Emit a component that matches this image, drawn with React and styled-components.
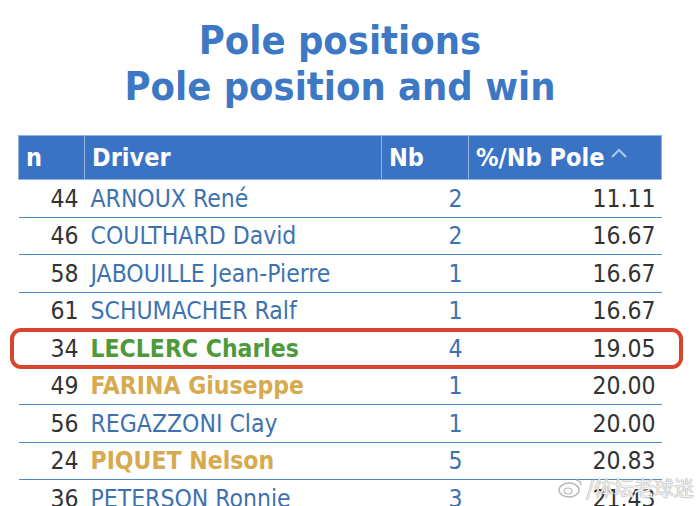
import styled, { createGlobalStyle } from "styled-components";

const GlobalStyle = createGlobalStyle`
  html, body {
    margin: 0;
    padding: 0;
    background: #ffffff;
  }
  body {
    font-family: "DejaVu Sans Condensed", "DejaVu Sans", sans-serif;
    overflow: hidden;
  }
`;

const Page = styled.div`
  position: relative;
  width: 700px;
  height: 506px;
  overflow: hidden;
  padding-top: 17px;
  box-sizing: border-box;
`;

const Title = styled.h1`
  margin: 0 0 26px 0;
  padding-right: 20px;
  text-align: center;
  font-family: "DejaVu Sans Condensed", "DejaVu Sans", sans-serif;
  font-weight: bold;
  font-size: 39.5px;
  line-height: 46px;
  color: #3d78c4;
`;

const Table = styled.table`
  margin-left: 18px;
  width: 643px;
  border-collapse: collapse;
  table-layout: fixed;
  font-size: 24.5px;
`;

const HeadCell = styled.th`
  height: 44px;
  padding: 0 7px;
  background: #3a72c4;
  color: #ffffff;
  font-size: 25px;
  font-weight: bold;
  text-align: left;
  border: 1px solid #8fb3e3;
  width: ${(p) => p.$w}px;
  box-sizing: border-box;
  white-space: nowrap;
`;

const Caret = styled.svg`
  margin-left: 6px;
  vertical-align: 7px;
`;

const Row = styled.tr`
  height: 37.5px;
  border-bottom: 1.5px solid #4f88c6;
`;

const Cell = styled.td`
  padding: 0 6px;
  text-align: ${(p) => p.$align || "left"};
  color: ${(p) => p.$color || "#333333"};
  font-weight: ${(p) => (p.$bold ? "bold" : "normal")};
  white-space: nowrap;
`;

const Highlight = styled.div`
  position: absolute;
  left: 10px;
  top: 328px;
  width: 673px;
  height: 41px;
  border: 4px solid #d8452f;
  border-radius: 11px;
  box-sizing: border-box;
  pointer-events: none;
`;

const Watermark = styled.div`
  position: absolute;
  right: 6px;
  bottom: 4px;
  display: flex;
  align-items: center;
  gap: 2px;
  font-family: "Noto Sans CJK SC", sans-serif;
  font-size: 20px;
  color: rgba(255, 255, 255, 0.85);
  text-shadow: 0 0 1px #9a9a9a, 0 0 1px #9a9a9a;
  pointer-events: none;
`;

const nameColors = {
  blue: "#3d72b0",
  green: "#4e9a3b",
  gold: "#d6aa4e",
};

const drivers = [
  { n: 44, name: "ARNOUX René", nb: 2, pct: "11.11", kind: "blue" },
  { n: 46, name: "COULTHARD David", nb: 2, pct: "16.67", kind: "blue" },
  { n: 58, name: "JABOUILLE Jean-Pierre", nb: 1, pct: "16.67", kind: "blue" },
  { n: 61, name: "SCHUMACHER Ralf", nb: 1, pct: "16.67", kind: "blue" },
  { n: 34, name: "LECLERC Charles", nb: 4, pct: "19.05", kind: "green" },
  { n: 49, name: "FARINA Giuseppe", nb: 1, pct: "20.00", kind: "gold" },
  { n: 56, name: "REGAZZONI Clay", nb: 1, pct: "20.00", kind: "blue" },
  { n: 24, name: "PIQUET Nelson", nb: 5, pct: "20.83", kind: "gold" },
  { n: 36, name: "PETERSON Ronnie", nb: 3, pct: "21.43", kind: "blue" },
];

const App = () => {
  return (
    <Page>
      <GlobalStyle />
      <Title>
        Pole positions
        <br />
        Pole position and win
      </Title>
      <Table>
        <thead>
          <tr>
            <HeadCell $w={66}>n</HeadCell>
            <HeadCell $w={297}>Driver</HeadCell>
            <HeadCell $w={87}>Nb</HeadCell>
            <HeadCell $w={193}>
              %/Nb Pole
              <Caret width="18" height="12" viewBox="0 0 18 12">
                <path d="M2 10 L9 3 L16 10" fill="none" stroke="#a6c6f0" strokeWidth="2.2" />
              </Caret>
            </HeadCell>
          </tr>
        </thead>
        <tbody>
          {drivers.map((d) => (
            <Row key={d.name}>
              <Cell $align="right">{d.n}</Cell>
              <Cell $color={nameColors[d.kind]} $bold={d.kind !== "blue"}>
                {d.name}
              </Cell>
              <Cell $align="right" $color="#3d72b0">
                {d.nb}
              </Cell>
              <Cell $align="right">{d.pct}</Cell>
            </Row>
          ))}
        </tbody>
      </Table>
      <Highlight />
      <Watermark>
        <svg width="26" height="22" viewBox="0 0 26 22">
          <ellipse cx="11" cy="13" rx="10" ry="7" fill="none" stroke="#b8b8b8" strokeWidth="1.5" />
          <ellipse cx="10" cy="14" rx="4" ry="3" fill="none" stroke="#b8b8b8" strokeWidth="1.2" />
          <path d="M18 3 a5 5 0 0 1 5 5" fill="none" stroke="#b8b8b8" strokeWidth="1.5" />
        </svg>
        <span>/体坛老球迷</span>
      </Watermark>
    </Page>
  );
};

export default App;
